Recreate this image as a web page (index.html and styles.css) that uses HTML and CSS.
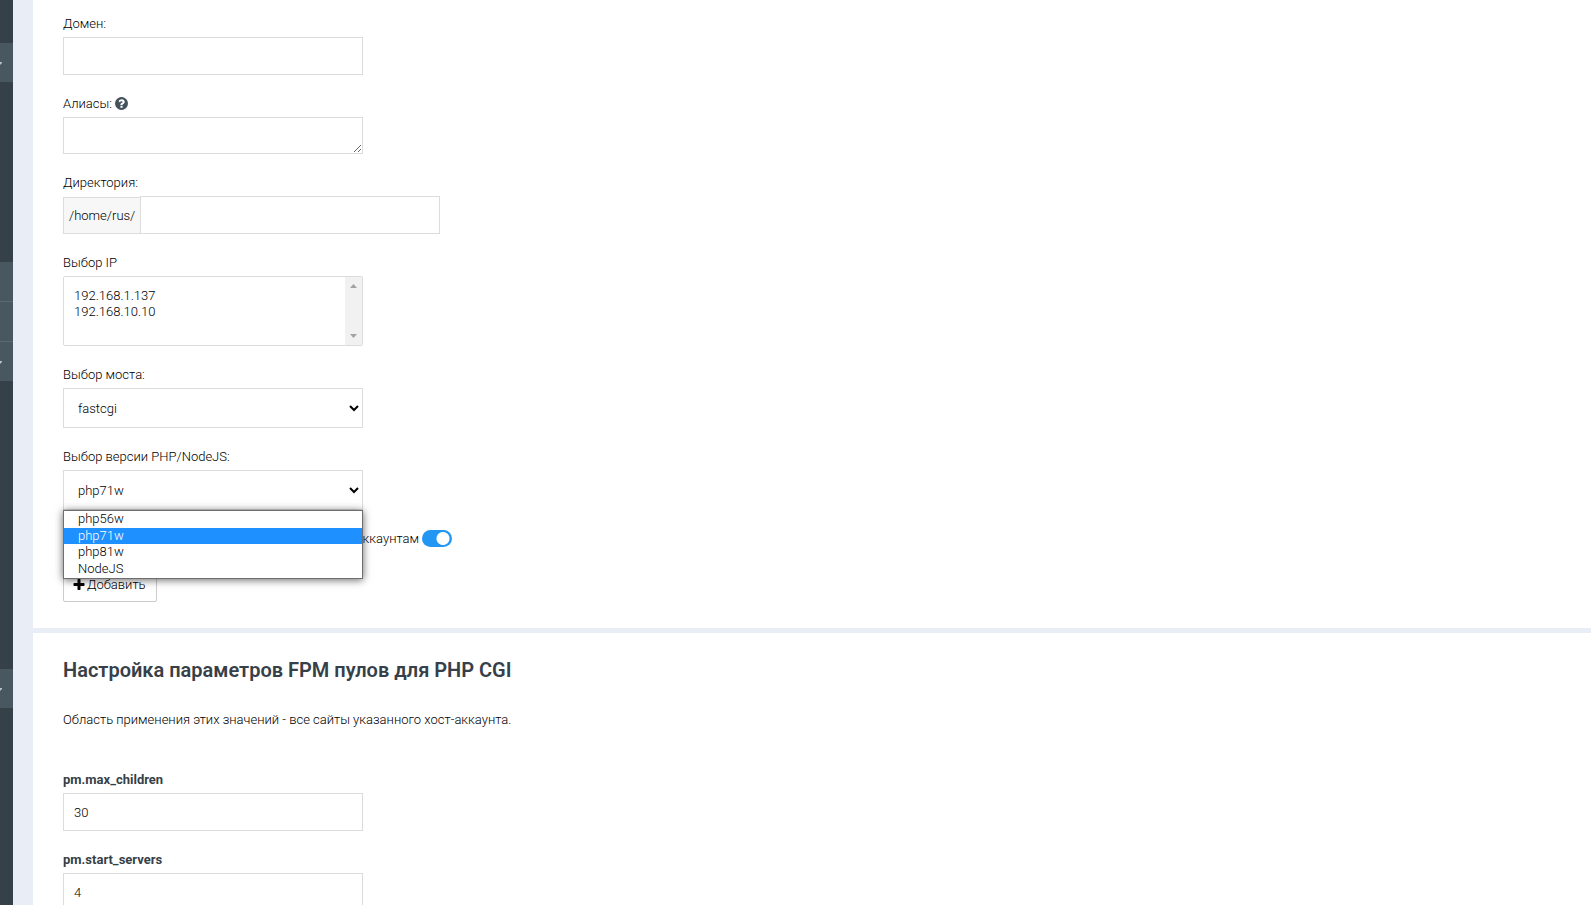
FILE: index.html
```html
<!DOCTYPE html>
<html lang="ru">
<head>
    <meta charset="UTF-8">
    <meta name="viewport" content="width=device-width, initial-scale=1.0">
    <title>Домены</title>
    <link rel="stylesheet" href="styles.css">
</head>
<body>
    <div class="layout">
        <!-- Боковое меню -->
        <aside class="sidebar">
            <div class="menu-item menu-top">
                <svg class="arrow" viewBox="0 0 2 3"><path d="M0 0h2v1L0 3z"/></svg>
            </div>
            <div class="menu-group">
                <div class="menu-item"></div>
                <div class="menu-item"></div>
                <div class="menu-item">
                    <svg class="arrow" viewBox="0 0 2 3"><path d="M0 0h2v1L0 3z"/></svg>
                </div>
            </div>
            <div class="menu-item menu-bottom">
                <svg class="arrow" viewBox="0 0 2 3"><path d="M0 0h2v1L0 3z"/></svg>
            </div>
        </aside>

        <main class="content">
            <!-- Добавление домена -->
            <form class="panel panel-domain">
                <div class="field">
                    <label for="domain">Домен:</label>
                    <input class="control" type="text" id="domain">
                </div>

                <div class="field">
                    <label for="aliases">Алиасы:
                        <svg class="icon-help" viewBox="0 0 1792 1792"><path d="M1024 1376v-192q0-14-9-23t-23-9h-192q-14 0-23 9t-9 23v192q0 14 9 23t23 9h192q14 0 23-9t9-23zm256-672q0-88-55.5-163t-138.5-116-170-41q-243 0-371 213-15 24 8 42l132 100q7 6 19 6 16 0 25-12 53-68 86-92 34-24 86-24 48 0 85.5 26t37.5 59q0 38-20 61t-68 45q-63 28-115.5 86.5t-52.5 125.5v36q0 14 9 23t23 9h192q14 0 23-9t9-23q0-19 21.5-49.5t54.5-49.5q32-18 49-28.5t46-35 44.5-48 28-60.5 12.5-81zm384 192q0 209-103 385.5t-279.5 279.5-385.5 103-385.5-103-279.5-279.5-103-385.5 103-385.5 279.5-279.5 385.5-103 385.5 103 279.5 279.5 103 385.5z"/></svg>
                    </label>
                    <textarea class="control" id="aliases"></textarea>
                </div>

                <div class="field">
                    <label for="directory">Директория:</label>
                    <div class="input-group">
                        <span class="addon">/home/rus/</span>
                        <input class="control" type="text" id="directory">
                    </div>
                </div>

                <div class="field">
                    <label for="ip">Выбор IP</label>
                    <div class="list-wrap">
                        <select class="control ip-list" id="ip" size="4" multiple>
                            <option>192.168.1.137</option>
                            <option>192.168.10.10</option>
                        </select>
                        <span class="scroll-track">
                            <svg viewBox="0 0 7 4"><path d="M0 4 3.5 0 7 4z"/></svg>
                            <svg viewBox="0 0 7 4"><path d="M0 0 3.5 4 7 0z"/></svg>
                        </span>
                    </div>
                </div>

                <div class="field">
                    <label for="bridge">Выбор моста:</label>
                    <select class="control dropdown" id="bridge">
                        <option>fastcgi</option>
                    </select>
                </div>

                <div class="field field-version">
                    <label for="version">Выбор версии PHP/NodeJS:</label>
                    <select class="control dropdown" id="version">
                        <option>php71w</option>
                    </select>
                    <ul class="options" role="listbox" aria-label="Выбор версии PHP/NodeJS">
                        <li role="option">php56w</li>
                        <li class="selected" role="option" aria-selected="true">php71w</li>
                        <li role="option">php81w</li>
                        <li role="option">NodeJS</li>
                    </ul>
                </div>

                <div class="switch-row">
                    <label for="accounts">аккаунтам</label>
                    <input class="switch" type="checkbox" id="accounts" checked>
                </div>

                <button class="btn" type="button">
                    <svg class="icon-plus" viewBox="0 0 1792 1792"><path d="M1600 736v192q0 40-28 68t-68 28h-416v416q0 40-28 68t-68 28h-192q-40 0-68-28t-28-68v-416h-416q-40 0-68-28t-28-68v-192q0-40 28-68t68-28h416v-416q0-40 28-68t68-28h192q40 0 68 28t28 68v416h416q40 0 68 28t28 68z"/></svg>
                    Добавить
                </button>
            </form>

            <!-- Параметры FPM -->
            <form class="panel panel-fpm">
                <h2>Настройка параметров FPM пулов для PHP CGI</h2>
                <p>Область применения этих значений - все сайты указанного хост-аккаунта.</p>
                <div class="field">
                    <label class="strong" for="max-children">pm.max_children</label>
                    <input class="control" type="text" id="max-children" value="30">
                </div>
                <div class="field">
                    <label class="strong" for="start-servers">pm.start_servers</label>
                    <input class="control" type="text" id="start-servers" value="4">
                </div>
            </form>
        </main>
    </div>
</body>
</html>
```

FILE: styles.css
```css
:root {
    --sidebar: #364048;
    --sidebar-item: #495760;
    --page: #e8edf6;
    --border: #dcdcdc;
    --heading: #373f48;
    --blue: #2196f3;
}
* {
    box-sizing: border-box;
}
body {
    margin: 0;
    background: var(--page);
    color: #000;
    font-family: Roboto, "Open Sans", sans-serif;
    font-size: 13px;
    font-weight: 300;
    line-height: 20px;
}
.layout {
    display: flex;
    height: 100vh;
    overflow: hidden;
}
.sidebar {
    flex: none;
    width: 13px;
    background: var(--sidebar);
}
.menu-item {
    display: flex;
    align-items: center;
    height: 39px;
    padding-top: 2px;
    background: var(--sidebar-item);
}
.menu-top {
    margin-top: 43px;
}
.menu-group {
    margin-top: 180px;
}
.menu-group .menu-item + .menu-item {
    height: 40px;
    border-top: 1px solid #5c6a72;
}
.menu-bottom {
    margin-top: 288px;
}
.arrow {
    width: 2px;
    height: 3px;
    fill: #b4c3cc;
}
.content {
    flex: 1;
    min-width: 0;
    padding-left: 20px;
}
.panel {
    background: #fff;
    padding: 14px 30px 26px;
}
.panel-fpm {
    margin-top: 5px;
    padding-top: 22px;
}
.field {
    margin-bottom: 19px;
}
.field label {
    display: block;
    height: 20px;
    margin-bottom: 3px;
}
.field .strong {
    color: var(--heading);
    font-weight: 700;
}
.control {
    display: block;
    width: 300px;
    height: 38px;
    margin: 0;
    padding: 6px 10px;
    border: 1px solid var(--border);
    border-radius: 0;
    background-color: #fff;
    color: #000;
    font: inherit;
}
textarea.control {
    height: 37px;
    resize: vertical;
}
.icon-help {
    width: 15px;
    height: 15px;
    margin-left: -1px;
    fill: #44525c;
    vertical-align: -3px;
}
.input-group {
    display: flex;
    align-items: flex-end;
}
.addon {
    height: 37px;
    padding: 0 5px;
    border: 1px solid var(--border);
    border-right: 0;
    background: #f7f7f7;
    line-height: 35px;
}
.list-wrap {
    position: relative;
    width: 300px;
}
.ip-list {
    height: 70px;
    padding: 11px 8px;
    border-radius: 2px;
    overflow: hidden;
}
.ip-list option {
    min-height: 16px;
    padding: 0 2px;
    font-weight: 300;
    line-height: 16px;
}
.scroll-track {
    position: absolute;
    top: 1px;
    right: 1px;
    bottom: 1px;
    display: flex;
    flex-direction: column;
    align-items: center;
    justify-content: space-between;
    width: 17px;
    padding: 7px 0;
    background: #f1f1f1;
}
.scroll-track svg {
    width: 7px;
    height: 4px;
    fill: #a3a3a3;
}
.dropdown {
    height: 40px;
}
.field-version {
    position: relative;
}
/* Раскрытый список поверх формы */
.options {
    position: absolute;
    top: 100%;
    left: 0;
    z-index: 2;
    width: 300px;
    margin: 0;
    padding: 0;
    border: 1px solid #6e6e6e;
    background: #fff;
    box-shadow: 0 1px 8px rgba(0, 0, 0, 0.6);
    list-style: none;
}
.options li {
    height: 17px;
    padding: 0 14px;
    line-height: 16px;
}
.options .selected {
    height: 16px;
    background: #1e90ff;
    color: #fff;
}
.switch-row {
    display: flex;
    align-items: center;
    justify-content: flex-end;
    gap: 3px;
    width: 389px;
    height: 19px;
    margin-bottom: 20px;
}
.switch {
    width: 30px;
    height: 17px;
    margin: 0;
    border-radius: 9px;
    background: radial-gradient(circle at 21px 50%, #fff 6px, var(--blue) 7px);
    appearance: none;
}
.btn {
    display: flex;
    align-items: center;
    gap: 1px;
    height: 34px;
    padding: 0 10px 0 8px;
    border: 1px solid #ccc;
    border-radius: 2px;
    background: #fff;
    color: #000;
    font: inherit;
}
.icon-plus {
    width: 14px;
    height: 14px;
}
h2 {
    margin: 0;
    color: var(--heading);
    font-size: 20px;
    font-weight: 600;
    line-height: 30px;
}
.panel-fpm p {
    margin: 25px 0 40px;
}
```
